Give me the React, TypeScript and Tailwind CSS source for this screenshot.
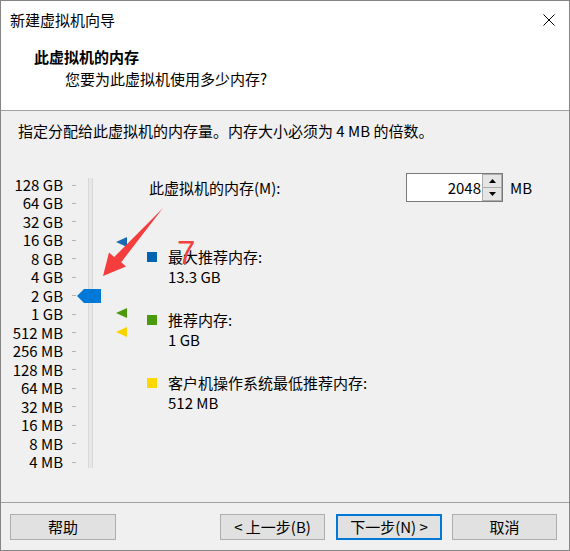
export default function App() {
  const labels = [
    "128 GB", "64 GB", "32 GB", "16 GB", "8 GB", "4 GB", "2 GB", "1 GB",
    "512 MB", "256 MB", "128 MB", "64 MB", "32 MB", "16 MB", "8 MB", "4 MB",
  ];
  const legend = [
    { color: "bg-[#0063b1]", title: "最大推荐内存:", value: "13.3 GB" },
    { color: "bg-[#4a9a0c]", title: "推荐内存:", value: "1 GB" },
    { color: "bg-[#ffd800]", title: "客户机操作系统最低推荐内存:", value: "512 MB" },
  ];
  return (
    <div className="relative w-[570px] h-[551px] border border-[#858585] bg-[#f0f0f0] flex flex-col text-black text-[15px] leading-[20px] font-['Noto_Sans_CJK_SC','Noto_Sans_CJK_JP',sans-serif]">
      {/* Header (white) */}
      <div className="h-[109px] bg-white flex flex-col shrink-0">
        <div className="h-[37px] flex items-center justify-between pl-[9px] pr-[14px]">
          <span>新建虚拟机向导</span>
          <svg width="12" height="12" viewBox="0 0 12 12">
            <path d="M0.5 0.5 L11.5 11.5 M11.5 0.5 L0.5 11.5" stroke="#000" strokeWidth="1" />
          </svg>
        </div>
        <div className="pl-[33px] pt-[9px] font-bold">此虚拟机的内存</div>
        <div className="pl-[64px] mt-[2px]">您要为此虚拟机使用多少内存?</div>
      </div>
      <div className="h-px bg-[#a0a0a0] shrink-0" />

      {/* Body */}
      <div className="h-[391px] shrink-0 flex flex-col">
        <div className="pl-[17px] pt-[10px]">指定分配给此虚拟机的内存量。内存大小必须为 4 MB 的倍数。</div>
        <div className="flex mt-[32px]">
          {/* Slider control */}
          <div className="relative w-[146px] h-[300px]">
            <div className="flex flex-col mt-[2.77px]">
              {labels.map((l) => (
                <div key={l} className="flex items-center h-[18.47px]">
                  <span className="w-[62px] text-right leading-[18px]">{l}</span>
                  <span className="ml-[9px] w-[4px] h-px bg-[#b4b4b4]" />
                </div>
              ))}
            </div>
            <div className="absolute left-[87px] top-[5px] w-[5px] h-[290px] border-x border-[#d9d9d9] bg-[#e7e7e7]" />
            <svg className="absolute left-[76px] top-[116px]" width="24" height="14" viewBox="0 0 24 14">
              <polygon points="0,7 7,0 24,0 24,14 7,14" fill="#0078d7" />
            </svg>
            <svg className="absolute left-[115px] top-[64px]" width="11" height="10" viewBox="0 0 11 10">
              <polygon points="0,5 11,0 11,10" fill="#1a6ab3" />
            </svg>
            <svg className="absolute left-[115px] top-[135px]" width="11" height="10" viewBox="0 0 11 10">
              <polygon points="0,5 11,0 11,10" fill="#4a9a0c" />
            </svg>
            <svg className="absolute left-[115px] top-[154px]" width="11" height="10" viewBox="0 0 11 10">
              <polygon points="0,5 11,0 11,10" fill="#f7d400" />
            </svg>
          </div>

          {/* Right column */}
          <div className="w-[384px] flex flex-col">
            <div className="h-[29px] flex items-center">
              <span className="pl-[2px]">此虚拟机的内存(M):</span>
              <div className="ml-auto w-[97px] h-[29px] border border-[#7a7a7a] bg-white flex">
                <div className="flex-1 flex items-center justify-end pr-[1px]">2048</div>
                <div className="w-[20px] flex flex-col">
                  <div className="flex-1 border border-[#acacac] bg-[#e5e5e5] flex items-center justify-center">
                    <svg width="7" height="4" viewBox="0 0 7 4"><polygon points="0,4 3.5,0 7,4" fill="#000" /></svg>
                  </div>
                  <div className="flex-1 border border-t-0 border-[#acacac] bg-[#e5e5e5] flex items-center justify-center">
                    <svg width="7" height="4" viewBox="0 0 7 4"><polygon points="0,0 7,0 3.5,4" fill="#000" /></svg>
                  </div>
                </div>
              </div>
              <span className="w-[28px] pl-[7px]">MB</span>
            </div>
            <div className="flex flex-col mt-[45px] gap-[23px]">
              {legend.map((item) => (
                <div key={item.title} className="flex">
                  <span className={`w-[10px] h-[10px] mt-[5px] ${item.color}`} />
                  <div className="ml-[11px] flex flex-col">
                    <span>{item.title}</span>
                    <span>{item.value}</span>
                  </div>
                </div>
              ))}
            </div>
          </div>
        </div>
      </div>
      <div className="h-px bg-[#a0a0a0] shrink-0" />

      {/* Footer */}
      <div className="flex-1 flex pt-[11px] pl-[9px]">
        <button className="w-[106px] h-[26px] border border-[#adadad] bg-[#e1e1e1] flex items-center justify-center">帮助</button>
        <button className="ml-[104px] w-[105px] h-[26px] border border-[#adadad] bg-[#e1e1e1] flex items-center justify-center">&lt; 上一步(B)</button>
        <button className="ml-[11px] w-[106px] h-[26px] border-2 border-[#0078d7] bg-[#e1e1e1] flex items-center justify-center">下一步(N) &gt;</button>
        <button className="ml-[10px] w-[105px] h-[26px] border border-[#adadad] bg-[#e1e1e1] flex items-center justify-center">取消</button>
      </div>

      {/* Red annotation overlay */}
      <svg className="absolute left-[-1px] top-[-1px] pointer-events-none" width="570" height="551" viewBox="0 0 570 551">
        <polygon points="163,208 121.2,262.2 126,266.5 103,276 109,252.5 114.2,257" fill="#f53d3d" />
        <text x="177" y="264" fontSize="33" fill="#f24141" fontFamily="'Liberation Sans', sans-serif">7</text>
      </svg>
    </div>
  );
}
